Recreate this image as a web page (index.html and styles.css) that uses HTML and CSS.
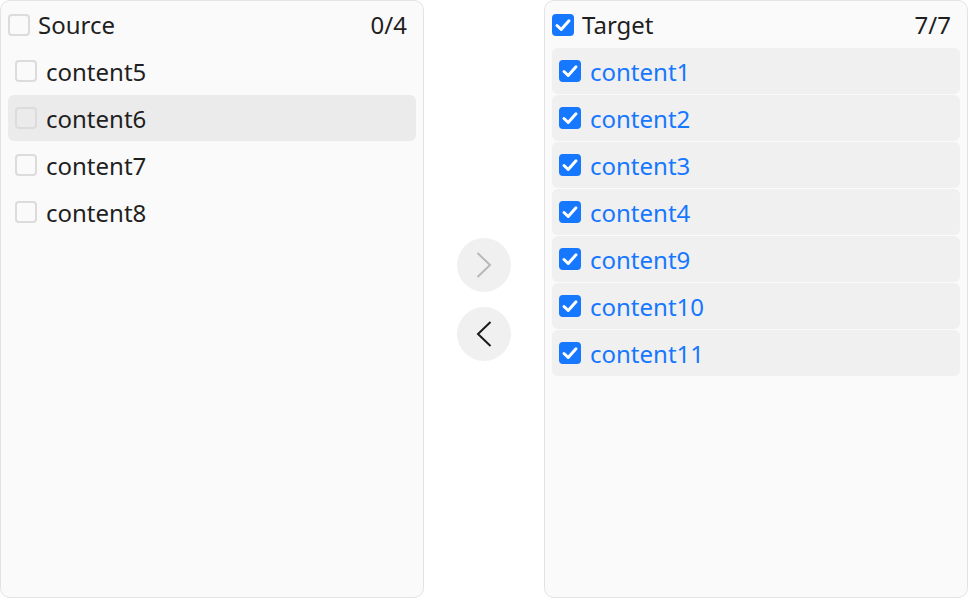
FILE: index.html
```html
<!DOCTYPE html>
<html>
<head>
<meta charset="utf-8">
<link rel="stylesheet" href="styles.css">
</head>
<body>
<div class="transfer">
  <section class="panel">
    <header class="panel-head">
      <span class="check"></span>
      <span class="title">Source</span>
      <span class="count">0/4</span>
    </header>
    <ul class="list">
      <li class="item"><span class="check"></span><span class="label">content5</span></li>
      <li class="item hover"><span class="check"></span><span class="label">content6</span></li>
      <li class="item"><span class="check"></span><span class="label">content7</span></li>
      <li class="item"><span class="check"></span><span class="label">content8</span></li>
    </ul>
  </section>
  <div class="actions">
    <button class="btn disabled" aria-label="move right">
      <svg width="20" height="28" viewBox="0 0 20 28"><path d="M3.5 2 L16 14 L3.5 26" fill="none" stroke="currentColor" stroke-width="2"/></svg>
    </button>
    <button class="btn" aria-label="move left">
      <svg width="20" height="28" viewBox="0 0 20 28"><path d="M16.5 2 L4 14 L16.5 26" fill="none" stroke="currentColor" stroke-width="2"/></svg>
    </button>
  </div>
  <section class="panel">
    <header class="panel-head">
      <span class="check on"><svg viewBox="0 0 22 22" width="22" height="22"><path d="M5 11.5 L9.2 15.5 L17 6.8" fill="none" stroke="#fff" stroke-width="3" stroke-linecap="round" stroke-linejoin="round"/></svg></span>
      <span class="title">Target</span>
      <span class="count">7/7</span>
    </header>
    <ul class="list">
      <li class="item sel"><span class="check on"><svg viewBox="0 0 22 22" width="22" height="22"><path d="M5 11.5 L9.2 15.5 L17 6.8" fill="none" stroke="#fff" stroke-width="3" stroke-linecap="round" stroke-linejoin="round"/></svg></span><span class="label">content1</span></li>
      <li class="item sel"><span class="check on"><svg viewBox="0 0 22 22" width="22" height="22"><path d="M5 11.5 L9.2 15.5 L17 6.8" fill="none" stroke="#fff" stroke-width="3" stroke-linecap="round" stroke-linejoin="round"/></svg></span><span class="label">content2</span></li>
      <li class="item sel"><span class="check on"><svg viewBox="0 0 22 22" width="22" height="22"><path d="M5 11.5 L9.2 15.5 L17 6.8" fill="none" stroke="#fff" stroke-width="3" stroke-linecap="round" stroke-linejoin="round"/></svg></span><span class="label">content3</span></li>
      <li class="item sel"><span class="check on"><svg viewBox="0 0 22 22" width="22" height="22"><path d="M5 11.5 L9.2 15.5 L17 6.8" fill="none" stroke="#fff" stroke-width="3" stroke-linecap="round" stroke-linejoin="round"/></svg></span><span class="label">content4</span></li>
      <li class="item sel"><span class="check on"><svg viewBox="0 0 22 22" width="22" height="22"><path d="M5 11.5 L9.2 15.5 L17 6.8" fill="none" stroke="#fff" stroke-width="3" stroke-linecap="round" stroke-linejoin="round"/></svg></span><span class="label">content9</span></li>
      <li class="item sel"><span class="check on"><svg viewBox="0 0 22 22" width="22" height="22"><path d="M5 11.5 L9.2 15.5 L17 6.8" fill="none" stroke="#fff" stroke-width="3" stroke-linecap="round" stroke-linejoin="round"/></svg></span><span class="label">content10</span></li>
      <li class="item sel"><span class="check on"><svg viewBox="0 0 22 22" width="22" height="22"><path d="M5 11.5 L9.2 15.5 L17 6.8" fill="none" stroke="#fff" stroke-width="3" stroke-linecap="round" stroke-linejoin="round"/></svg></span><span class="label">content11</span></li>
    </ul>
  </section>
</div>
</body>
</html>
```
FILE: styles.css
```css
* { box-sizing: border-box; }
html, body { margin: 0; padding: 0; background: #fff; }
body {
  font-family: "Noto Sans", "Open Sans", sans-serif;
  font-size: 24px;
  color: #1f1f1f;
}
.transfer {
  display: flex;
  width: 968px;
  height: 598px;
}
.panel {
  width: 424px;
  height: 598px;
  border: 1px solid #e3e3e3;
  border-radius: 10px;
  background: #fafafa;
  padding: 0 7px;
}
.panel-head {
  display: flex;
  align-items: center;
  height: 47px;
  padding-right: 9px;
}
.panel-head .check { margin-right: 8px; }
.title { flex: 1; }
.list {
  list-style: none;
  margin: 0;
  padding: 0;
  display: flex;
  flex-direction: column;
  gap: 1px;
}
.item {
  display: flex;
  align-items: center;
  height: 46px;
  padding-left: 7px;
  border-radius: 6px;
}
.item .check { margin-right: 9px; }
.item.hover { background: #ebebeb; }
.item.sel { background: #f0f0f0; color: #1677ff; }
.check {
  width: 22px;
  height: 22px;
  border: 2px solid #dcdcdc;
  border-radius: 4px;
  display: inline-flex;
  flex: none;
  background: transparent;
}
.check.on {
  border: none;
  background: #1677ff;
}
.actions {
  width: 120px;
  display: flex;
  flex-direction: column;
  align-items: center;
  justify-content: center;
  gap: 15px;
}
.btn {
  width: 54px;
  height: 54px;
  border-radius: 50%;
  border: none;
  background: #f0f0f0;
  color: #1a1a1a;
  display: flex;
  align-items: center;
  justify-content: center;
  padding: 0;
}
.btn.disabled { color: #b8b8b8; }
```
